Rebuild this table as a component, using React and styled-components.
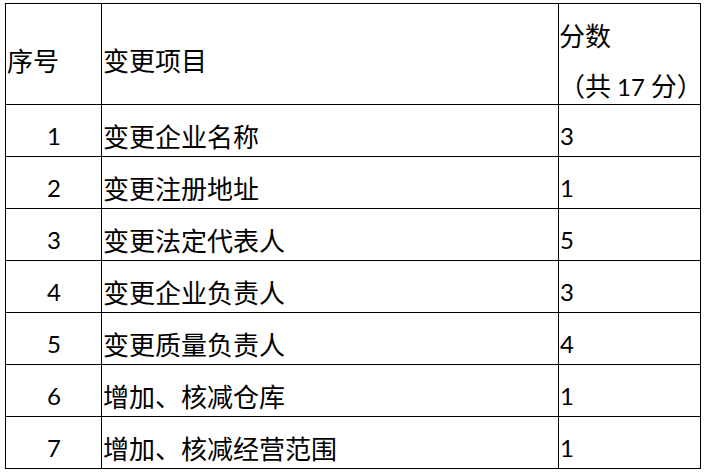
import React from 'react'
import styled, { createGlobalStyle } from 'styled-components'

const GlobalStyle = createGlobalStyle`
  html, body {
    margin: 0;
    background: #fff;
  }
  body {
    font-family: "Noto Sans CJK SC", sans-serif;
    color: #000;
  }
`

const Page = styled.div`
  padding: 3px 0 0 5px;
`

const Grid = styled.div`
  display: grid;
  grid-template-columns: 95px 456px 141px;
  grid-template-rows: 100px repeat(7, 51px);
  gap: 1px;
  padding: 1px;
  width: max-content;
  background: #000;
`

const Cell = styled.div`
  background: #fff;
  display: flex;
  align-items: center;
  justify-content: ${p => (p.$center ? 'center' : 'flex-start')};
  padding: ${p => (p.$head ? '12px' : '10px')} 0 0 1px;
  font-size: 26px;
  line-height: 30px;
  white-space: nowrap;
  box-sizing: border-box;
`

const StackCell = styled.div`
  background: #fff;
  display: flex;
  flex-direction: column;
  gap: 20px;
  padding: 16px 0 0 0;
  font-size: 26px;
  line-height: 30px;
  white-space: nowrap;
`

const Num = styled.span`
  font-family: Lato, "Liberation Sans", sans-serif;
  font-size: 24px;
  padding: ${p => (p.$gap ? '0 6px' : '0')};
`

const rows = [
  ['1', '变更企业名称', '3'],
  ['2', '变更注册地址', '1'],
  ['3', '变更法定代表人', '5'],
  ['4', '变更企业负责人', '3'],
  ['5', '变更质量负责人', '4'],
  ['6', '增加、核减仓库', '1'],
  ['7', '增加、核减经营范围', '1']
]

export default function App() {
  return (
    <Page>
      <GlobalStyle />
      <Grid>
        <Cell $head>序号</Cell>
        <Cell $head>变更项目</Cell>
        <StackCell>
          <div>分数</div>
          <div>（共<Num $gap>17</Num>分）</div>
        </StackCell>
        {rows.map(([no, item, score]) => (
          <React.Fragment key={no}>
            <Cell $center><Num>{no}</Num></Cell>
            <Cell>{item}</Cell>
            <Cell><Num>{score}</Num></Cell>
          </React.Fragment>
        ))}
      </Grid>
    </Page>
  )
}
